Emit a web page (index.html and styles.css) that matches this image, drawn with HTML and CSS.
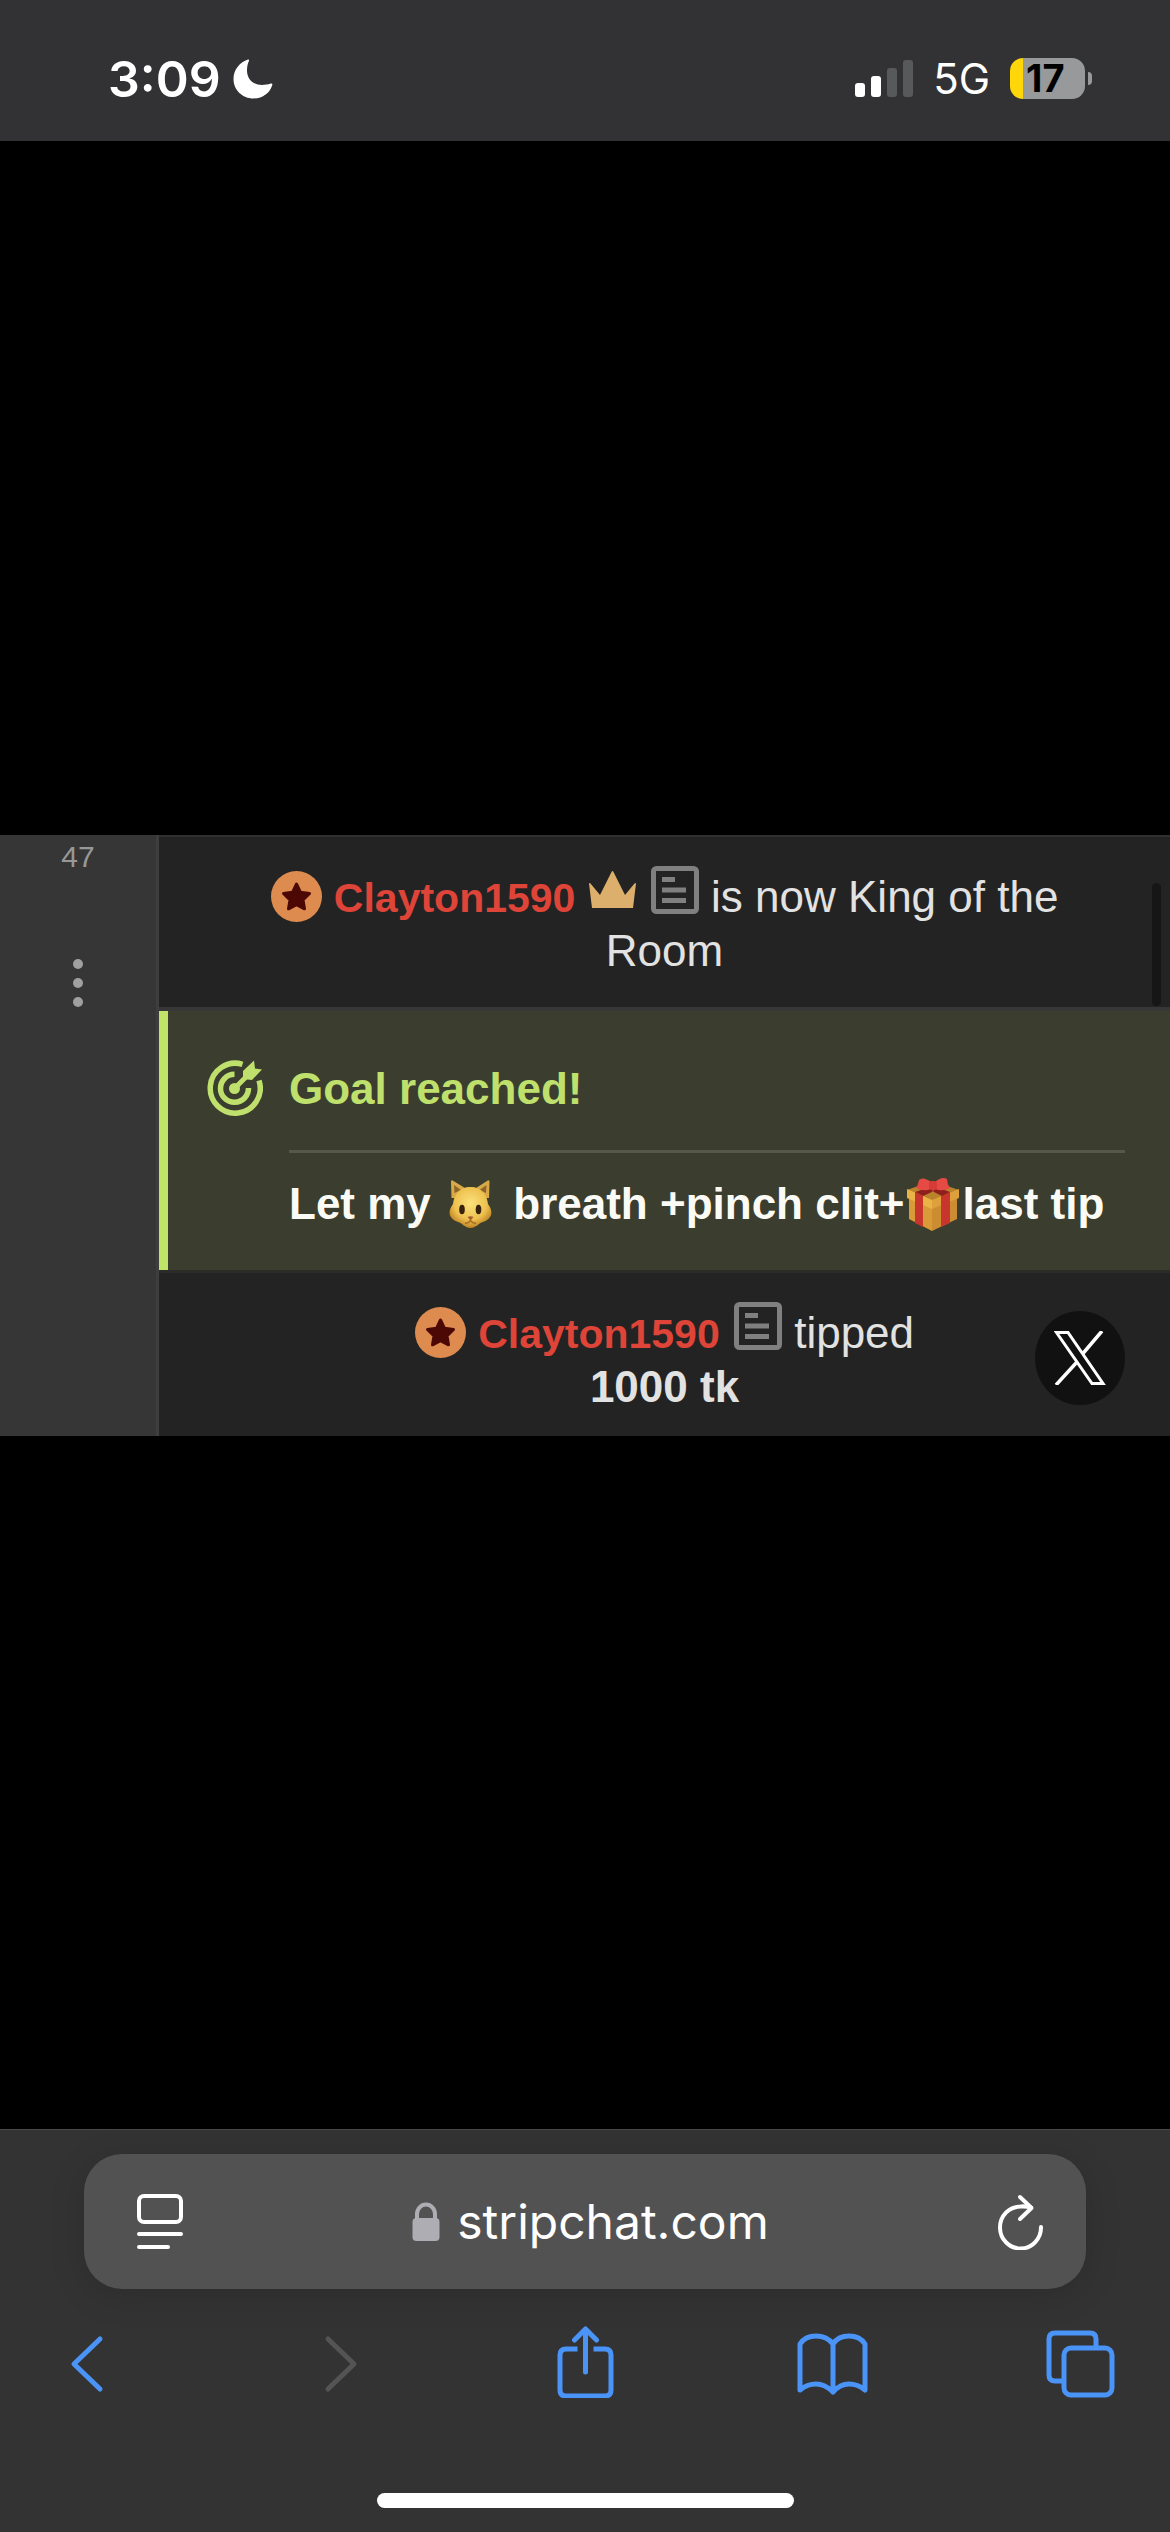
FILE: index.html
```html
<!DOCTYPE html>
<html lang="en">
<head>
<meta charset="utf-8">
<meta name="viewport" content="width=device-width, initial-scale=1">
<title>stripchat.com</title>
<link rel="stylesheet" href="styles.css">
</head>
<body>
<svg class="sprite" aria-hidden="true">
  <symbol id="star" viewBox="0 0 51 51">
    <circle cx="25.500" cy="25.500" r="25.500" fill="#de8b50"/>
    <path d="M25.500 13l4 8.300 9 1.200-6.500 6.300 1.500 9-8-4.200-8 4.200 1.500-9-6.500-6.300 9-1.200z" fill="#4c0804" stroke="#4c0804" stroke-width="3" stroke-linejoin="round"/>
  </symbol>
  <symbol id="note" viewBox="0 0 48 48">
    <rect x="2.500" y="2.500" width="43" height="43" rx="3" fill="none" stroke="#808080" stroke-width="5"/>
    <path d="M11 13.500h13M11 24h24M11 34.500h24" stroke="#808080" stroke-width="5"/>
  </symbol>
</svg>

<header class="status">
  <div class="status-group">
    <time class="clock">3:09</time>
    <svg class="moon" viewBox="0 0 40 40" aria-label="Do not disturb"><path d="M15 0.500C7 3 0.500 10.500 0.500 20c0 11 9 19.500 20 19.500 9 0 16.500-5.500 18.800-13.500 0.300-1.200-0.500-1.800-1.500-1.400C35 25.700 32 26 29 26 20 26 14 20 14 11.500c0-3.500 0.600-6.500 1.900-9.500C16.300 1 16 0.300 15 0.500z" fill="#fff"/></svg>
  </div>
  <div class="status-group">
    <svg class="signal" viewBox="0 0 58 38" aria-label="Signal"><rect y="23" width="10" height="14" rx="3" fill="#fff"/><rect x="16" y="16" width="10" height="21" rx="3" fill="#fff"/><rect x="32" y="8" width="10" height="29" rx="3" fill="#58595b"/><rect x="48" width="10" height="37" rx="3" fill="#58595b"/></svg>
    <span class="network">5G</span>
    <span class="battery"><span class="battery-body">17</span><span class="battery-tip"></span></span>
  </div>
</header>

<main class="stage">
  <section class="chat">
    <aside class="rail">
      <span>47</span>
      <button class="more" aria-label="More"><svg viewBox="0 0 10 48"><circle cx="5" cy="5" r="5"/><circle cx="5" cy="24" r="5"/><circle cx="5" cy="43" r="5"/></svg></button>
    </aside>
    <div class="feed">
      <p class="message">
        <svg class="badge"><use href="#star"/></svg>
        <a class="name" href="#">Clayton1590</a>
        <svg class="crown" viewBox="0 0 49 41"><path d="M1 12.500q0.500-1 1.500 0L12 24 23.500 1q1-2 2 0L37 24l9.500-11.500q1.500-1 1.500 0L45 37H4z" fill="#dcb06c"/></svg>
        <svg class="note"><use href="#note"/></svg>
        is now King of the Room
      </p>
      <article class="goal">
        <svg class="target" viewBox="0 0 56 56" fill="none" stroke="#bfe06c">
          <path d="M35.500 4.300A25 25 0 1 0 52 20.500" stroke-width="5.500"/>
          <path d="M27.500 14.300A14 14 0 1 0 41.500 28" stroke-width="5.500"/>
          <circle cx="27.500" cy="28.500" r="5.500" fill="#bfe06c" stroke="none"/>
          <path d="M27.500 28.500L42 14" stroke-width="5"/>
          <path d="M36 19V11L47 0.500 48 8.500 55 9.500 45 20z" fill="#bfe06c" stroke="none"/>
        </svg>
        <div class="goal-text">
          <h2 class="goal-title">Goal reached!</h2>
          <p class="goal-line">Let my <svg class="cat" viewBox="0 0 50 50" role="img" aria-label="cat">
            <defs><radialGradient id="fur" cx=".5" cy=".4" r=".6"><stop offset="0" stop-color="#fbe27c"/><stop offset=".65" stop-color="#eec14f"/><stop offset="1" stop-color="#bd8222"/></radialGradient></defs>
            <path d="M6.500 19L6 2.500Q6.500 0.500 8.500 2L20 9q5-1.500 11 0L42 2q2-1.500 2.500 0.500L44 19z" fill="#d9a948"/>
            <path d="M9.500 14l-.5-8 7 5zM41 14l.5-8-7 5z" fill="#8d6528"/>
            <path d="M25.500 8C37 8 42 16 43 25c6 8 4 15-5 18-4 1-7 6-12.500 6S17 44 13 43C4 40 2 33 8 25 9 16 14 8 25.500 8z" fill="url(#fur)"/>
            <ellipse cx="17" cy="30.500" rx="2.800" ry="4.800" fill="#38220d"/><ellipse cx="33.500" cy="30.500" rx="2.800" ry="4.800" fill="#38220d"/>
            <path d="M22.500 38q3-1.500 6 0l-3 3.500z" fill="#a35c35"/><path d="M20 44q3 1 5.500-2.500Q28 45 31 44" fill="none" stroke="#a96d28" stroke-width="1.500"/>
          </svg> breath +pinch clit+<svg class="gift" viewBox="0 0 54 54" role="img" aria-label="gift">
            <path d="M1 13L26 4l27 9-27 11z" fill="#b9832c"/>
            <path d="M3 20l23 9v25L3 42z" fill="#d99a38"/><path d="M51 20L26 29v25l25-12z" fill="#cc8c31"/>
            <path d="M1 12l25 11v9L1 21z" fill="#eab345"/><path d="M53 12L26 23v9l27-11z" fill="#dda03d"/>
            <path d="M9 15l8 4v31l-8-4zM44 15l-9 4v31l9-4z" fill="#c8352c"/>
            <path d="M9 15l15-5 4 4-11 5zM44 15l-14-5-4 4 10 5z" fill="#8f1f1d"/>
            <path d="M25 5Q17-1 13 3q-1 5-3 8 7 4 15 1zM29 5q7-6 12-3 0 5 3 9-7 4-15 1z" fill="#e64a44"/>
            <rect x="23" y="4" width="8" height="9" rx="3" fill="#d83a37"/>
          </svg>last tip</p>
        </div>
      </article>
      <p class="message">
        <svg class="badge"><use href="#star"/></svg>
        <a class="name" href="#">Clayton1590</a>
        <svg class="note"><use href="#note"/></svg>
        tipped
        <strong class="amount">1000 tk</strong>
      </p>
      <span class="scrollbar"></span>
      <button class="x-badge" aria-label="Share on X"><svg viewBox="0 0 52 54"><path d="M2.500 1.500H14L49 52.500H38z" fill="none" stroke="#fff" stroke-width="3"/><path d="M48 0L28.500 23M23 31L2 54" stroke="#fff" stroke-width="3.500"/></svg></button>
    </div>
  </section>
</main>

<footer class="browser">
  <div class="address">
    <button aria-label="Page menu"><svg class="reader" viewBox="0 0 46 55" fill="none" stroke="#fff" stroke-width="4" stroke-linecap="round"><rect x="2" y="2" width="42" height="26" rx="5"/><path d="M2 40h42M2 53h29"/></svg></button>
    <button class="site"><svg class="lock" viewBox="0 0 28 40"><path d="M5 19v-7a9 9.500 0 0 1 18 0v7" fill="none" stroke="#aeadb4" stroke-width="4"/><rect x="0.500" y="16" width="27" height="23" rx="4" fill="#aeadb4"/></svg>stripchat.com</button>
    <button aria-label="Reload"><svg class="reload" viewBox="0 0 46 56" fill="none" stroke="#fff" stroke-width="4" stroke-linecap="round" stroke-linejoin="round"><path d="M43 33A20.500 21 0 1 1 22.500 12.500Q28 12 33 13.500"/><path d="M22 3l11.500 11L22 25"/></svg></button>
  </div>
  <nav class="toolbar">
    <button aria-label="Back"><svg viewBox="0 0 72 72"><path d="M49 13L23 38l26 25"/></svg></button>
    <button class="off" aria-label="Forward" disabled><svg viewBox="0 0 72 72"><path d="M29 13l26 25-26 25"/></svg></button>
    <button aria-label="Share"><svg viewBox="0 0 72 72"><path d="M29.500 23H18q-6 0-6 6v35q0 6 6 6h39q6 0 6-6V29q0-6-6-6H45.500" stroke-linecap="butt"/><path d="M37.500 46V3M26.500 14l11-11 11 11"/></svg></button>
    <button aria-label="Bookmarks"><svg viewBox="0 0 72 72"><path d="M37 18Q31 10 20 10T4 18V64q7-6 16-6t17 8Q44 58 53 58t16 6V18Q64 10 53 10T37 18zV66"/></svg></button>
    <button aria-label="Tabs"><svg viewBox="0 0 72 72"><rect x="20" y="22" width="48" height="47" rx="7"/><path d="M52 21v-8q0-6-6-6H11q-6 0-6 6v36q0 6 6 6h8" stroke-linecap="butt"/></svg></button>
  </nav>
  <div class="home"></div>
</footer>
</body>
</html>
```

FILE: styles.css
```css
* {
  box-sizing: border-box;
}

body {
  margin: 0;
  min-height: 100vh;
  display: flex;
  flex-direction: column;
  background: #000;
  color: #fff;
  font-family: Inter, "Liberation Sans", sans-serif;
}

button {
  display: flex;
  align-items: center;
  padding: 0;
  border: 0;
  background: none;
  color: inherit;
  font: inherit;
}

p,
h2 {
  margin: 0;
}

.sprite {
  display: none;
}

.status {
  display: flex;
  justify-content: space-between;
  align-items: center;
  height: 141px;
  padding: 16px 78px 0 108px;
  background: #323234;
}

.status-group {
  display: flex;
  align-items: center;
}

.clock {
  font-size: 50px;
  font-weight: 600;
  line-height: 60px;
}

.moon {
  width: 40px;
  height: 40px;
  margin-left: 12px;
}

.signal {
  width: 58px;
  height: 38px;
}

.network {
  margin: 0 20px;
  font-size: 42px;
  font-weight: 400;
  line-height: 48px;
}

.battery {
  display: flex;
  align-items: center;
  gap: 3px;
}

.battery-body {
  width: 75px;
  height: 41px;
  padding-left: 16px;
  border-radius: 13px;
  background: linear-gradient(to right, #ffd60a 13px, #98999b 13px);
  color: #000;
  font-size: 38px;
  font-weight: 700;
  line-height: 41px;
}

.battery-tip {
  width: 4px;
  height: 13px;
  border-radius: 0 6px 6px 0;
  background: #98999b;
}

.stage {
  flex: 1;
  display: flex;
  align-items: center;
}

.chat {
  flex: 1;
  display: flex;
  font-family: "Liberation Sans", Arial, sans-serif;
}

.rail {
  display: flex;
  flex-direction: column;
  align-items: center;
  gap: 85px;
  width: 159px;
  padding-top: 5px;
  border-right: 3px solid #3e3e3e;
  background: #363636;
  color: #989898;
  font-size: 30px;
  line-height: 34px;
}

.more svg {
  width: 10px;
  height: 48px;
  fill: #a0a0a0;
}

.feed {
  position: relative;
  flex: 1;
  border-top: 2px solid #303030;
  background: #232323;
  font-size: 44px;
  line-height: 54px;
}

.message {
  padding: 29px 80px;
  color: #e2e2e2;
  text-align: center;
}

.message:last-of-type {
  padding-bottom: 22px;
}

.badge {
  width: 51px;
  height: 51px;
  vertical-align: -10px;
}

.name {
  color: #de4438;
  font-size: 41px;
  font-weight: 700;
  line-height: 1;
  text-decoration: none;
}

.crown {
  width: 49px;
  height: 41px;
  vertical-align: baseline;
}

.note {
  width: 48px;
  height: 48px;
  margin-left: 2px;
  vertical-align: -2px;
}

.amount {
  display: block;
}

.goal {
  display: flex;
  align-items: flex-start;
  gap: 26px;
  padding: 49px 45px 39px 48px;
  border-top: 4px solid #373737;
  border-bottom: 3px solid #2b2c28;
  background: linear-gradient(to right, #bfe468 9px, #3b3e2f 9px);
}

.target {
  flex: none;
  width: 56px;
  height: 56px;
}

.goal-text {
  flex: 1;
}

.goal-title {
  padding: 2px 0 34px;
  border-bottom: 3px solid #55584a;
  color: #bfe06c;
  font-size: 44px;
  font-weight: 700;
  line-height: 54px;
}

.goal-line {
  padding-top: 24px;
  color: #fbfbf6;
  font-weight: 700;
  white-space: nowrap;
}

.cat {
  width: 50px;
  height: 50px;
  margin: 0 6px 0 2px;
  vertical-align: -10px;
}

.gift {
  width: 54px;
  height: 54px;
  margin: 0 2px;
  vertical-align: -12px;
}

.scrollbar {
  position: absolute;
  top: 46px;
  right: 9px;
  width: 9px;
  height: 123px;
  border-radius: 5px;
  background: #161616;
}

.x-badge {
  position: absolute;
  right: 45px;
  bottom: 31px;
  justify-content: center;
  width: 90px;
  height: 94px;
  border-radius: 50%;
  background: #111;
}

.x-badge svg {
  width: 52px;
  height: 54px;
}

.browser {
  padding: 24px 0;
  border-top: 1px solid #4a4a4b;
  background: #333334;
}

.address {
  display: flex;
  justify-content: space-between;
  align-items: center;
  height: 135px;
  margin: 0 84px;
  padding: 0 42px 0 53px;
  border-radius: 38px;
  background: #525253;
  box-shadow: 0 6px 36px rgba(0, 0, 0, .14);
}

.reader {
  width: 46px;
  height: 55px;
}

.reload {
  width: 46px;
  height: 56px;
}

.site {
  gap: 17px;
  font-size: 48px;
  line-height: 60px;
}

.lock {
  width: 28px;
  height: 40px;
}

.toolbar {
  display: flex;
  justify-content: space-between;
  padding: 37px 54px 95px 51px;
}

.toolbar svg {
  width: 72px;
  height: 72px;
  fill: none;
  stroke: #4a94f8;
  stroke-width: 5;
  stroke-linecap: round;
  stroke-linejoin: round;
}

.toolbar .off svg {
  stroke: #545455;
}

.home {
  width: 417px;
  height: 15px;
  margin: 0 auto;
  border-radius: 8px;
  background: #fff;
}
```
